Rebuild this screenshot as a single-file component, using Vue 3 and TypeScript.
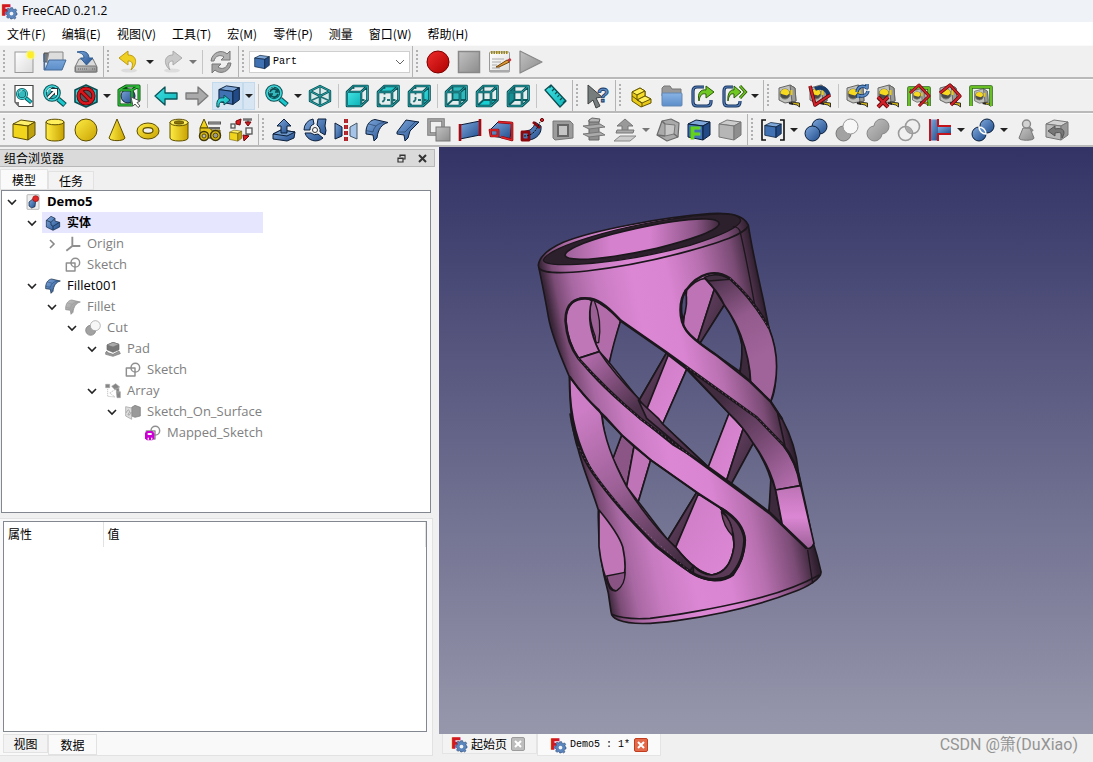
<script setup lang="ts">
import { ref } from 'vue'

interface Tool { kind: 'button' | 'arrow' | 'separator' | 'combo'; icon: string; active: boolean; muted: boolean }
interface Node { label: string; icon: string; level: number; open: 'yes' | 'no' | 'leaf'; tone: 'strong' | 'plain' | 'hidden'; selected?: boolean }

const poly = (points: string, fill: string, stroke = '#0b1f3a', width = 1) =>
  `<polygon points="${points}" fill="${fill}" stroke="${stroke}" stroke-width="${width}" stroke-linejoin="round"/>`
const line = (d: string, stroke: string, width = 1.5, extra = '') =>
  `<path d="${d}" fill="none" stroke="${stroke}" stroke-width="${width}" stroke-linejoin="round" ${extra}/>`
const disc = (x: number, y: number, r: number, fill: string, stroke: string, width = 1) =>
  `<circle cx="${x}" cy="${y}" r="${r}" fill="${fill}" stroke="${stroke}" stroke-width="${width}"/>`

const cube = (top: string, front: string, side: string, stroke: string) =>
  poly('1,6 9,2 23,4 16,8', top, stroke) + poly('1,6 16,8 16,22 1,19', front, stroke) + poly('16,8 23,4 23,17 16,22', side, stroke)

const viewCube = (face: string, fill = 'url(#gCyan)', hidden = true) =>
  `<path d="M2 8L8.500 2H22.500V16L16 22H2Z" fill="#e4eeee"/><polygon points="${face}" fill="${fill}"/>` +
  (hidden ? line('M8.500 2V16H22.500M8.500 16L2 22', '#1f6f73', 1.8, 'stroke-dasharray="3 2.500"') : line('M8.500 2V16H22.500M8.500 16L2 22', '#0d5f63', 1.8)) +
  line('M2 8H16V22H2ZM2 8L8.500 2H22.500L16 8M22.500 2V16L16 22', '#0b4d52', 2.6) +
  line('M2 8H16V22H2ZM2 8L8.500 2H22.500L16 8M22.500 2V16L16 22', '#25a6aa', 1)

const lens = (x: number, y: number, r: number) =>
  line(`M${x + r - 1} ${y + r - 1}L22 21`, '#0b4d52', 5.4) + line(`M${x + r - 1} ${y + r - 1}L21.500 20.500`, '#19c8cc', 3) +
  disc(x, y, r, '#35b9bd', '#0b4d52', 3.6) + disc(x, y, r, 'none', '#3fd6d9', 1.7) +
  `<path d="M${x - r + 2} ${y - 1}q1-4 5-4" fill="none" stroke="#b9eeee" stroke-width="1.200"/>`

const tape =
  poly('2,4 13,1 18,4 19,17 8,19 2,16', '#c0c0bc', '#666') + poly('13,1 18,4 19,17 15,18', '#9a9a96', '#666') +
  disc(8, 10, 5, '#4a4a48', '#77776f') + '<path d="M3.500 9.500a4.500 4.500 0 0 1 9 0l-2.500 2-4-1z" fill="#f7d91f"/>' +
  '<path d="M13.500 6h2v5h-2z" fill="#e9cc1a"/><path d="M14 18L22.500 19V23L20 21L15 20Z" fill="#d8b912" stroke="#222" stroke-width=".9"/><path d="M12 19l4 1" stroke="#222" stroke-width="2"/>'

const fillet = (a: string, stroke: string) =>
  `<path d="M1 12.500C2 5 6 2 10 1.500L23 4.500C17 6 13 11 12 20L9 23L8 17L1 16Z" fill="${a}" stroke="${stroke}"/><path d="M1 12.500L8 14C9 8 14 5 19 4.500M4 6L11 8" fill="none" stroke="${stroke}" opacity=".45"/>`
const gear =
  '<g fill="#5b86bd" stroke="#203e6b" stroke-width=".8"><path d="M14.500 7h3l.5 2.300 1.600.7 2-1.200 2 2-1.200 2 .6 1.700L24 15v3l-2 .5-.7 1.700 1.200 2-2 1.800-2-1.200-1.600.7L16.500 24h-2l-.6-1.500-1.600-.7-2 1.200-2-2 1.200-2-.7-1.500L7 17v-3l2-.5.7-1.600-1.200-2 2-2 2 1.200 1.500-.7z"/></g><circle cx="15.700" cy="15.800" r="2.800" fill="#f3f3f3"/>'
const sketch = line('M2 9H15V21H2Z', '#8f8f8f', 2.2) + '<circle cx="15.500" cy="8.500" r="6.500" fill="none" stroke="#8f8f8f" stroke-width="2.200"/>'

const icons: Record<string, string> = {
  logo: '<text x="1" y="18.500" font-family="Liberation Sans, sans-serif" font-weight="700" font-size="21" fill="#d31920" stroke="#d31920" stroke-width="2">F</text>' + gear,
  new: '<rect x="3" y="2" width="18" height="20.500" fill="url(#gPaper)" stroke="#999"/><circle cx="18.500" cy="5" r="5" fill="#ffff68" opacity=".65"/><circle cx="18.500" cy="5" r="3.200" fill="#ffee25"/>',
  open: '<path d="M1 3H8L10 5H19V12H1Z" fill="#777" stroke="#4f4f4f"/><path d="M6 2H20V12H4Z" fill="#ddd" stroke="#888"/><path d="M1 4V20H19L23 10H6L2 20Z" fill="url(#gFolder)" stroke="#456b99"/>',
  save: '<path d="M5 9H19L23 17V22H1V17Z" fill="#dadada" stroke="#777"/><rect x="1.500" y="16" width="21" height="6" rx="1" fill="url(#gGrey)" stroke="#777"/><path d="M3 2C11 0 15 3 15 8H19L12.500 15 6.500 8H10C10 5 8 3 3 2Z" fill="url(#gBlue)" stroke="#315e94"/><path d="M4 19h9M18 19h3" stroke="#666" stroke-dasharray="1 1"/>',
  undo: '<ellipse cx="12" cy="20.500" rx="8" ry="2" fill="#ddd"/><path d="M2 8L11 1V5C20 5 21 14 14 20C17 13 15 11 11 11V15Z" fill="#efcf22" stroke="#bd9b13"/>',
  redo: '<ellipse cx="12" cy="20.500" rx="8" ry="2" fill="#ddd"/><path d="M22 8L13 1V5C4 5 3 14 10 20C7 13 9 11 13 11V15Z" fill="#c9c9c9" stroke="#aaa"/>',
  refresh: '<path d="M2 11C3 2 13-1 18 4L21 1V10H12L15 7C11 4 6 6 5 11Z" fill="#b1b1b1" stroke="#777"/><path d="M22 13C21 22 11 25 6 20L3 23V14H12L9 17C13 20 18 18 19 13Z" fill="#a4a4a4" stroke="#777"/>',
  record: disc(12, 12, 11, 'url(#gRed)', '#7e0000'),
  stop: '<rect x="1.500" y="1.500" width="21" height="21" fill="url(#gGrey)" stroke="#888" stroke-width="1.500"/>',
  macro: '<rect x="1.500" y="2" width="20" height="20" rx="1" fill="url(#gPaper)" stroke="#999"/><path d="M3 2.500H20" stroke="#9c8618" stroke-width="3" stroke-dasharray="1.500 1"/><path d="M4 9H16M4 12H13M4 15H9M4 18H12" stroke="#aaa"/><path d="M1 21h21" stroke="#aaa" stroke-width="2"/><path d="M8 17L19 10L21.500 12L11 17Z" fill="#e29a37" stroke="#70450b"/><path d="M19 10L22 8 23.500 10 21.500 12Z" fill="#b9363c"/>',
  play: poly('1,1 23,12 1,23', 'url(#gGrey)', '#888', 1.2),
  fitAll: '<path d="M3 1.500H21V22.500H7L3 18Z" fill="#fff" stroke="#444" stroke-width="1.200"/><path d="M3 18H7V22.500Z" fill="#777"/>' + '<g transform="translate(3.500 3.500) scale(.72)">' + lens(9, 9, 6.5) + '</g>',
  fitSel: lens(9, 9, 7) + '<path d="M5 14L12 7M8 6h5v5" stroke="#26343a" stroke-width="4" fill="none"/><path d="M5 14L12 7M8 6h5v5" stroke="#fff" stroke-width="2" fill="none"/>',
  drawStyle: poly('12,1 23,6 23,18 12,23 1,18 1,6', 'url(#gCyan)', '#0b4d52', 1.6) + '<circle cx="12" cy="12" r="7.500" fill="#555a60" stroke="#500" stroke-width="4"/><path d="M7 7L17 17" stroke="#500" stroke-width="4"/><circle cx="12" cy="12" r="7.500" fill="none" stroke="#d8161c" stroke-width="2.500"/><path d="M7 7L17 17" stroke="#d8161c" stroke-width="2.500"/>',
  boundBox: disc(11, 12, 7, 'url(#gBlue)', '#0b1f3a') + line('M2 6H15V21H2ZM2 6L9 2H22L15 6M22 2V16L15 21M9 2V6', '#0a4d10', 3) + line('M2 6H15V21H2ZM2 6L9 2H22L15 6M22 2V16L15 21', '#2fbf3b', 1.4) + '<path d="M14 13L23 17L20 18.500L23 22L21 23.500L18 20L16 22Z" fill="#fff" stroke="#555"/>',
  back: poly('1,12 11,3 11,9 23,9 23,15 11,15 11,21', 'url(#gCyan)', '#0b5458', 1.3),
  forward: poly('23,12 13,3 13,9 1,9 1,15 13,15 13,21', '#aaa', '#7b7b7b', 1.3),
  linkGo: '<g transform="translate(2 0) scale(.93)">' + cube('#7fa8d8', '#3f71b3', '#214a86', '#0b1f3a') + '</g><path d="M1 23C0 16 3 13 8 14V11L14 16L8 21V18C4 17 3 19 3 23Z" fill="url(#gCyan)" stroke="#0b4d52"/>',
  zoomSync: lens(9, 9, 7) + '<path d="M5 8C6 4 11 4 12 7M13 5v3h-3M13 10C12 14 7 14 6 11M5 13v-3h3" stroke="#0b4d52" stroke-width="1.700" fill="none"/>',
  iso: poly('12,2 22,7 22,17 12,22 2,17 2,7', '#d9e8e8', '#0b4d52', 2.4) + line('M2 17L12 12.500L22 17M12 2V12', '#1f6f73', 1.4) + line('M2 7L12 12L22 7M12 12V22', '#0b4d52', 2.4) + line('M2 7L12 12L22 7M12 12V22M12 2L22 7V17L12 22L2 17V7Z', '#25a6aa', 1),
  front: viewCube('2,8 16,8 16,22 2,22') + '<rect x="3" y="9" width="12" height="12" fill="url(#gCyan)"/>',
  top: viewCube('2,8 8.5,2 22.5,2 16,8'),
  right: viewCube('16,8 22.5,2 22.5,16 16,22'),
  rear: viewCube('8.5,2 22.5,2 22.5,16 8.5,16', '#2fb9bd', false),
  bottom: viewCube('2,22 8.5,16 22.5,16 16,22', '#18d0d4', false),
  left: viewCube('2,8 8.5,2 8.5,16 2,22', '#138f94', false),
  ruler: poly('2,6 8,1 23,17 17,23', 'url(#gCyan)', '#0b4d52', 1.3) + line('M8 2L6.500 4M11 5L9 7M14 8L12 10M16 11L14.500 13M19 14L17 16M22 17L20 19', '#0b4d52', 1.2),
  whats: '<path d="M2 1L16 13L10 14L14 22L10 24L7 16L2 20Z" fill="#777c7c" stroke="#3c4141"/><text x="11" y="17.500" font-family="Liberation Sans, sans-serif" font-size="20" font-weight="700" fill="#5c8cc6" stroke="#163863" stroke-width=".8">?</text>',
  part: poly('3,8 11,4 16,7 16,12 22,15 22,19 12,23 3,17', '#e9ca18', '#655500') + poly('3,8 11,4 16,7 8,11', '#fff05a', '#655500') + poly('8,11 16,7 16,12 8,16', '#f5dc28', '#655500') + poly('8,16 16,12 22,15 13,19', '#fff05a', '#655500') + line('M13 19V23M3 12L13 19', '#655500', 1),
  group: '<path d="M2 4L4 2H10L12 5H21V12H2Z" fill="#999" stroke="#777"/><rect x="2" y="9" width="20" height="13" rx="1" fill="url(#gFolder)" stroke="#6387b2"/>',
  link: line('M13 3H6Q2 3 2 7V18Q2 22 6 22H16Q20 22 20 18V16', '#17345f', 3.2) + line('M13 3H6Q2 3 2 7V18Q2 22 6 22H16Q20 22 20 18V16', '#5a83bb', 1.2) + '<path d="M8 17C6 9 10 5 15 6V2L23 8L15 14V10C11 9 9 11 8 17Z" fill="#70c822" stroke="#2c5b08"/>',
  links: line('M11 3H5Q2 3 2 7V18Q2 22 6 22H14Q18 22 18 18V17', '#17345f', 3.2) + line('M11 3H5Q2 3 2 7V18Q2 22 6 22H14Q18 22 18 18V17', '#5a83bb', 1.2) + '<path d="M6 17C5 9 9 5 12 6V2L19 8L12 14V10C9 9 7 11 6 17Z" fill="#70c822" stroke="#2c5b08"/><path d="M18 2L23.500 8L18 14" fill="none" stroke="#2c5b08" stroke-width="3"/><path d="M18 2L23.500 8L18 14" fill="none" stroke="#70c822" stroke-width="1.300"/>',
  measLin: tape,
  measAng: tape + line('M7 5C15 1 20 7 21 12', '#173b6b', 4) + line('M2 2L7 21L22 11', '#620609', 3.5) + line('M2 2L7 21L22 11', '#d3232a', 2),
  measRefresh: tape + line('M12 8C13 2 18 1 22 4V0M23 7C22 12 17 13 13 11V14', '#173b6b', 3.4) + line('M12 8C13 2 18 1 22 4V0M23 7C22 12 17 13 13 11V14', '#5b8ac4', 1.8),
  measClear: tape + line('M2 13L12 23M12 13L2 23', '#690609', 4) + line('M2 13L12 23M12 13L2 23', '#d3232a', 2.4),
  measAll: line('M2 22V4H22V22', '#255f0b', 3.5) + line('M2 22V4H22V22', '#68bf24', 2) + '<g transform="translate(4 4) scale(.75)">' + tape + '</g>' + line('M3 9L12 1L22 12L12 22', '#650609', 3) + line('M3 9L12 1L22 12L12 22', '#d3232a', 1.7),
  meas3d: tape + line('M2 9L12 1L22 12L13 21', '#650609', 3.3) + line('M2 9L12 1L22 12L13 21', '#d3232a', 1.8),
  measDelta: '<g transform="translate(4 4) scale(.8)">' + tape + '</g>' + line('M2 22V3H22V22', '#255f0b', 3.5) + line('M2 22V3H22V22', '#68bf24', 2),
  box: cube('#fff06b', '#f0d51c', '#bfa10b', '#5d4e00'),
  boxBlue: cube('#7fa8d8', '#3f71b3', '#214a86', '#0b1f3a'),
  cylinder: '<path d="M3 4V20C3 24 21 24 21 20V4Z" fill="url(#gYellowH)" stroke="#5d4e00"/><ellipse cx="12" cy="4" rx="9" ry="2.800" fill="#ffef5d" stroke="#5d4e00"/>',
  sphere: disc(12, 12, 11, 'url(#gYellow)', '#5d4e00'),
  cone: '<path d="M12 1L20 20C19 23.500 5 23.500 4 20Z" fill="url(#gYellowH)" stroke="#5d4e00"/>',
  torus: '<ellipse cx="12" cy="13" rx="11" ry="8" fill="url(#gYellow)" stroke="#5d4e00"/><ellipse cx="12" cy="12.500" rx="5" ry="2.800" fill="#f0f0f0" stroke="#5d4e00" stroke-width="1.200"/>',
  tube: '<path d="M3 4V20C3 24 21 24 21 20V4Z" fill="url(#gYellowH)" stroke="#5d4e00"/><ellipse cx="12" cy="4.500" rx="9" ry="3.300" fill="#ffef5d" stroke="#5d4e00"/><ellipse cx="12" cy="4.500" rx="5" ry="1.600" fill="#8a7408" stroke="#5d4e00"/>',
  primitives: poly('6,1 10,10 2,10', '#efd21b', '#5d4e00') + '<path d="M10 5h13" stroke="#555" stroke-width="3"/><path d="M11 5h11" stroke="#aaa"/><path d="M2 10H13V12H22V20H2Z" fill="#e3c51b" stroke="#5d4e00"/><path d="M11 10h11" stroke="#666" stroke-width="2"/>' + disc(6, 18, 4.5, '#d4b615', '#40370b', 1.5) + disc(6, 18, 2, '#bbb', '#5d4e00') + disc(17.5, 17.5, 5, '#d4b615', '#40370b', 1.5) + disc(17.5, 17.5, 2.4, '#999', '#5d4e00'),
  builder: '<g transform="translate(0 11) scale(.55)">' + cube('#fff06b', '#f0d51c', '#bfa10b', '#5d4e00') + '</g><path d="M14 1.500H23M19 2V6M16 19L21 15" stroke="#777" stroke-width="2.500"/><path d="M7 3L12 1L11 7L7 6ZM16 4H22L19 8ZM14 17L20 18L15 23Z" fill="#d81b22" stroke="#720709"/><rect x="17" y="10" width="6" height="6" fill="#f4f4f4" stroke="#555" stroke-width="1.300"/><rect x="2" y="6" width="4" height="4" fill="#eee" stroke="#555" stroke-width="1.300"/>',
  extrude: poly('1,16 9,12 23,14 22,20 15,23 1,21', 'url(#gBlue)') + poly('1,16 9,12 23,14 15,18', '#6f98cb') + '<path d="M12 1L19 8H15V15H9V8H5Z" fill="url(#gBlue)" stroke="#0b1f3a"/>',
  revolve: '<path d="M10 1A11 11 0 0 0 1 12L7 12A6 6 0 0 1 11 6ZM2 15A11 11 0 0 0 20 20L15 16A6 6 0 0 1 8 15ZM15 1L23 1L22 8A11 11 0 0 1 22 17L17 14A6 6 0 0 0 16 9L14 7Z" fill="url(#gBlue)" stroke="#0b1f3a"/><circle cx="12" cy="12" r="2.500" fill="#fff" stroke="#333"/>',
  mirror: poly('1,5 8,9 8,18 1,21', 'url(#gBlue)') + poly('23,5 16,9 16,18 23,21', '#a6c4e8', '#456') + '<path d="M12 1V23" stroke="#650609" stroke-width="3.600" stroke-dasharray="4 2"/><path d="M12 1V23" stroke="#e01b22" stroke-width="2" stroke-dasharray="4 2"/>',
  fillet: fillet('url(#gBlue)', '#0b1f3a'),
  chamfer: poly('1,14 10,2 23,4 14,13 12,20 9,23 8,17 1,16', 'url(#gBlue)') + line('M1 14L9 14L19 4', '#0b1f3a', 1, 'opacity=".45"'),
  makeFace: '<rect x="2" y="2" width="14" height="14" fill="none" stroke="#777" stroke-width="3.500"/><rect x="2" y="2" width="14" height="14" fill="none" stroke="#aaa" stroke-width="1.500"/><rect x="9" y="9" width="14" height="14" fill="url(#gGrey)" stroke="#777"/>',
  ruled: poly('2,7 22,3 22,17 2,21', 'url(#gBlue)') + line('M2 6V23M22 1V18', '#a50b10', 2.6),
  loft: poly('1,12 9,4 23,5 21,21 9,19 2,18', 'url(#gBlue)') + line('M9 4L23 5V22L12 19M1 12H9V18H2Z', '#8b090e', 2.7) + line('M9 4L23 5V22L12 19M1 12H9V18H2Z', '#df2429', 1.3),
  sweep: '<path d="M2 14L10 12C13 10 15 7 15 4L21 8C22 15 17 21 9 22L2 21Z" fill="url(#gBlue)" stroke="#0b1f3a"/>' + line('M2 14H9V22H2ZM13 4L20 10', '#8b090e', 2.8) + disc(22, 2, 1.6, '#df2429', '#650609') + line('M4 18C15 18 18 8 20 4', '#111', 1, 'stroke-dasharray="2 1"'),
  offset: poly('2,3 19,3 22,6 22,20 4,22 2,20', '#9c9c9c', '#777') + '<rect x="7" y="7" width="10" height="11" fill="#c5c5c5" stroke="#666" stroke-width="2"/>',
  sections: poly('7,2 17,2 17,22 7,22', '#8f8f8f', '#666') + poly('1,8 18,6 23,9 7,11', '#aaa', '#777') + poly('1,16 18,14 23,17 7,19', '#aaa', '#777') + poly('7,2 10,0 18,1 17,4 7,4', '#b5b5b5', '#666'),
  projection: '<path d="M12 1L20 8H15V13H9V8H4Z" fill="#999" stroke="#777"/>' + poly('4,12 21,12 20,15 3,15', '#aaa', '#777') + poly('7,18 23,18 17,23 1,23', '#ccc', '#888'),
  thickness: poly('6,3 15,1 23,5 22,19 11,23 1,17', '#aaa', '#6b6b6b', 1.2) + poly('9,6 19,7 18,16 9,18', '#c7c7c7', '#777') + line('M6 3L9 6M9 18L1 17M18 16L22 19', '#6b6b6b', 1.5),
  projFace: cube('#7fa8d8', '#3f71b3', '#214a86', '#0b1f3a') + '<text x="3" y="21" font-family="Liberation Sans, sans-serif" font-weight="700" font-size="17" fill="#65d21b" stroke="#65d21b" stroke-width="1.200">F</text>',
  cubeGrey: cube('#ccc', '#b6b6b6', '#8e8e8e', '#777'),
  compound: '<path d="M5 2H1V22H5M19 2H23V22H19" fill="none" stroke="#111" stroke-width="1.600"/><g transform="translate(3 3) scale(.75)">' + cube('#7fa8d8', '#3f71b3', '#214a86', '#0b1f3a') + '</g>',
  boolean: disc(15.5, 8.5, 7.5, 'url(#gBlue)', '#0b1f3a') + disc(8.5, 15.5, 7.5, 'url(#gBlue)', '#0b1f3a'),
  cut: disc(8.5, 15.5, 7.5, '#a2a2a2', '#777') + disc(15.5, 8.5, 7.5, '#f7f7f7', '#999'),
  union: '<path d="M8 8A7.500 7.500 0 1 1 16 16A7.500 7.500 0 1 1 8 8Z" fill="url(#gGrey)" stroke="#858585"/>',
  common: disc(15.5, 8.5, 7, 'none', '#9a9a9a', 1.6) + disc(8.5, 15.5, 7, 'none', '#9a9a9a', 1.6) + '<path d="M9 8.500A7 7 0 0 1 15 15A7 7 0 0 1 9 8.500Z" fill="#aaa"/>',
  join: '<rect x="2" y="1.500" width="9" height="21" fill="url(#gBlue)"/><rect x="10" y="9" width="13" height="7" fill="url(#gBlue)"/>' + line('M2 1V23M10 1V8H23M10 23V16H23', '#c2141a', 2),
  split: disc(16, 8, 7, 'url(#gBlue)', '#0b1f3a') + disc(8, 16, 7, 'url(#gBlue)', '#0b1f3a') + '<path d="M8 9A7 7 0 0 1 15 16A7 7 0 0 1 8 9Z" fill="#5e8cc6" stroke="#fff" stroke-width="1.500"/>',
  check: '<path d="M9 10L5 20C5 23 20 23 20 20L16 10Z" fill="url(#gGrey)" stroke="#777"/>' + disc(12.5, 6, 4, '#d2d2d2', '#888', 1.4) + line('M15 9L19 13', '#888', 2),
  defeature: cube('#d3d3d3', '#b8b8b8', '#989898', '#777') + '<path d="M3 13L10 8V11C19 9 21 14 17 20C17 14 15 14 10 15V18Z" fill="#777" stroke="#555"/>',
  doc: '<rect x="3" y="1" width="18" height="22" rx="1" fill="#eee" stroke="#999"/>' + poly('6,12 11,8 16,10 15,19 10,21 6,18', 'url(#gBlue)') + disc(16, 7, 4.5, '#e32525', '#8b1414'),
  body: poly('2,8 9,2 15,5 15,9 22,11 22,18 12,23 2,18', 'url(#gBlue)') + line('M2 8L9 11L15 5M9 11V15L12 17L22 11M12 17V22', '#0b1f3a', 1),
  origin: line('M11 1V15H23M11 15L2 22', '#8f8f8f', 2.8),
  sketch,
  filletGrey: fillet('url(#gGrey)', '#888'),
  pad: poly('3,6 12,2 21,5 21,13 12,17 3,13', '#777', '#666') + poly('3,6 12,2 21,5 12,9', '#aaa', '#777') + '<path d="M1 17L3 15V17L12 20L21 15L23 19L12 23L1 20Z" fill="#999" stroke="#777"/>',
  array: '<path d="M1 2H7V7H1ZM10 5L16 1L22 6L15 10ZM17 13H23V22H18ZM16 8h5v7h-3z" fill="#858585" stroke="#a5a5a5"/><path d="M4 9V20L15 21L7 15L15 10" fill="none" stroke="#aaa" stroke-dasharray="2 1"/>',
  surface: '<path d="M10 5L15 2L23 5V18L15 20L10 18Z" fill="#999" stroke="#777"/><path d="M1 4L10 6V23L1 18Z" fill="#ddd" stroke="#999"/><path d="M2 13C5 5 9 11 5 15C3 18 9 17 9 12" fill="none" stroke="#888"/>',
  mapped: sketch + '<path d="M3 9H11L14 12V20L11 23H3L0 20V12Z" fill="#cc00d5"/><path d="M4 12h6v3H4zM4 19h2v3H4zM9 19h2v3H9z" fill="#fff"/>',
}

const parse = (text: string): Tool[][] =>
  text.split(';').map((group) =>
    group.trim().split(/\s+/).map((token) => {
      const name = token.replace('*', '')
      const kind = name === '|' ? 'separator' : name === 'v' || name === 'w' ? 'arrow' : name === 'combo' ? 'combo' : 'button'
      return { kind, icon: name, active: token.endsWith('*'), muted: name === 'w' } as Tool
    }),
  )

const rows: Tool[][][] = [
  parse('new open save ; undo v redo w | refresh ; combo ; record stop macro play'),
  parse('fitAll fitSel drawStyle v boundBox | back forward linkGo* v* | zoomSync v iso | front top right | rear bottom left | ruler ; whats ; part group link links v ; measLin measAng | measRefresh measClear measAll meas3d measDelta'),
  parse('box cylinder sphere cone torus tube primitives builder ; extrude revolve mirror fillet chamfer makeFace ruled loft sweep offset sections projection w thickness projFace cubeGrey ; compound v boolean cut union common join v split v check defeature'),
]

const menus = ['文件(F)', '编辑(E)', '视图(V)', '工具(T)', '宏(M)', '零件(P)', '测量', '窗口(W)', '帮助(H)']
const nodes: Node[] = [
  { label: 'Demo5', icon: 'doc', level: 0, open: 'yes', tone: 'strong' },
  { label: '实体', icon: 'body', level: 1, open: 'yes', tone: 'strong', selected: true },
  { label: 'Origin', icon: 'origin', level: 2, open: 'no', tone: 'hidden' },
  { label: 'Sketch', icon: 'sketch', level: 2, open: 'leaf', tone: 'hidden' },
  { label: 'Fillet001', icon: 'fillet', level: 1, open: 'yes', tone: 'plain' },
  { label: 'Fillet', icon: 'filletGrey', level: 2, open: 'yes', tone: 'hidden' },
  { label: 'Cut', icon: 'cut', level: 3, open: 'yes', tone: 'hidden' },
  { label: 'Pad', icon: 'pad', level: 4, open: 'yes', tone: 'hidden' },
  { label: 'Sketch', icon: 'sketch', level: 5, open: 'leaf', tone: 'hidden' },
  { label: 'Array', icon: 'array', level: 4, open: 'yes', tone: 'hidden' },
  { label: 'Sketch_On_Surface', icon: 'surface', level: 5, open: 'yes', tone: 'hidden' },
  { label: 'Mapped_Sketch', icon: 'mapped', level: 6, open: 'leaf', tone: 'hidden' },
]
const workbench = ref('Part')
</script>

<template>
  <div class="window">
    <svg class="defs" width="0" height="0" aria-hidden="true">
      <defs>
        <linearGradient id="gBlue" x1="0" y1="0" x2="1" y2="1"><stop offset="0" stop-color="#7fa8dc" /><stop offset="1" stop-color="#1f4c8c" /></linearGradient>
        <linearGradient id="gCyan" x1="0" y1="0" x2="1" y2="1"><stop offset="0" stop-color="#3fe0e2" /><stop offset="1" stop-color="#10b4b8" /></linearGradient>
        <linearGradient id="gGrey" x1="0" y1="0" x2="1" y2="1"><stop offset="0" stop-color="#c2c2c2" /><stop offset="1" stop-color="#8c8c8c" /></linearGradient>
        <linearGradient id="gRed" x1="0" y1="0" x2="1" y2="1"><stop offset="0" stop-color="#f02d2d" /><stop offset="1" stop-color="#ae0000" /></linearGradient>
        <linearGradient id="gPaper" x1="0" y1="0" x2="1" y2="1"><stop offset="0" stop-color="#fff" /><stop offset="1" stop-color="#dcdcdc" /></linearGradient>
        <linearGradient id="gFolder" x1="0" y1="0" x2="0" y2="1"><stop offset="0" stop-color="#88b3e6" /><stop offset="1" stop-color="#5d8ec8" /></linearGradient>
        <linearGradient id="gYellow" x1="0" y1="0" x2="1" y2="1"><stop offset="0" stop-color="#ffec45" /><stop offset="1" stop-color="#c8a200" /></linearGradient>
        <linearGradient id="gYellowH" x1="0" y1="0" x2="1" y2="0"><stop offset="0" stop-color="#ffec45" /><stop offset="1" stop-color="#c8a200" /></linearGradient>
      </defs>
    </svg>

    <header class="title"><svg class="small" viewBox="0 0 24 24" v-html="icons.logo" /><span>FreeCAD 0.21.2</span></header>
    <nav class="menu"><button v-for="m in menus" :key="m" type="button">{{ m }}</button></nav>

    <div v-for="(row, r) in rows" :key="r" class="toolrow">
      <div v-for="(group, g) in row" :key="g" class="toolbar" role="toolbar">
        <template v-for="(tool, t) in group" :key="t">
          <span v-if="tool.kind === 'separator'" class="sep" />
          <button v-else-if="tool.kind === 'arrow'" type="button" class="arrow" :class="{ active: tool.active, muted: tool.muted }" aria-label="更多" />
          <label v-else-if="tool.kind === 'combo'" class="combo">
            <svg class="small" viewBox="0 0 24 24" v-html="icons.boxBlue" />
            <select v-model="workbench" aria-label="Workbench"><option>Part</option></select>
            <svg class="caret" viewBox="0 0 10 6"><path d="M1 1l4 4 4-4" fill="none" stroke="#666" /></svg>
          </label>
          <button v-else type="button" class="tool" :class="{ active: tool.active }" :aria-label="tool.icon"><svg viewBox="0 0 24 24" v-html="icons[tool.icon]" /></button>
        </template>
      </div>
    </div>

    <main class="body">
      <aside class="dock">
        <div class="dock-title">
          <span>组合浏览器</span>
          <button type="button" aria-label="浮动"><svg viewBox="0 0 9 9"><path d="M3 3V1H8V5H6M1 4H6V8H1ZM1 4.500H6M3 1.500H8" fill="none" stroke="#333" stroke-width="1.200" /></svg></button>
          <button type="button" aria-label="关闭"><svg viewBox="0 0 9 9"><path d="M1 1L8 8M8 1L1 8" stroke="#333" stroke-width="2" /></svg></button>
        </div>
        <div class="tabs upper" role="tablist">
          <button type="button" role="tab" class="current" aria-selected="true">模型</button>
          <button type="button" role="tab" aria-selected="false">任务</button>
        </div>
        <ul class="tree" role="tree">
          <li v-for="(n, i) in nodes" :key="i" role="treeitem" :aria-level="n.level + 1" :class="n.tone" :style="{ paddingLeft: n.level * 20 + 'px' }">
            <button v-if="n.open !== 'leaf'" type="button" class="twist" :aria-label="'展开 ' + n.label">
              <svg viewBox="0 0 10 10"><path :d="n.open === 'yes' ? 'M1 3l4 4 4-4' : 'M3 1l4 4-4 4'" fill="none" :stroke="n.open === 'yes' ? '#222' : '#888'" stroke-width="1.600" /></svg>
            </button>
            <span v-else class="twist" />
            <span class="entry" :class="{ selected: n.selected }"><svg class="small" viewBox="0 0 24 24" v-html="icons[n.icon]" /><span>{{ n.label }}</span></span>
          </li>
        </ul>
        <section class="props">
          <div class="sheet">
            <table><thead><tr><th class="key">属性</th><th>值</th></tr></thead></table>
          </div>
          <div class="tabs lower" role="tablist">
            <button type="button" role="tab" aria-selected="false">视图</button>
            <button type="button" role="tab" class="current" aria-selected="true">数据</button>
          </div>
        </section>
      </aside>

      <section class="stage">
        <svg class="scene" viewBox="439 147 654 587" preserveAspectRatio="xMidYMid meet" role="img" aria-label="Demo5">
          <defs>
            <linearGradient id="sky" gradientUnits="userSpaceOnUse" x1="0" y1="-159" x2="0" y2="1602"><stop offset="0" stop-color="#333366" /><stop offset="1" stop-color="#9797ac" /></linearGradient>
            <linearGradient id="shell" gradientUnits="userSpaceOnUse" x1="35" y1="215" x2="655" y2="89">
              <stop offset="0" stop-color="#3a2639" /><stop offset=".05" stop-color="#7b4c76" /><stop offset=".13" stop-color="#a868a2" /><stop offset=".25" stop-color="#c87bc1" /><stop offset=".42" stop-color="#dc87d4" /><stop offset=".58" stop-color="#da85d2" /><stop offset=".74" stop-color="#b870b0" /><stop offset=".9" stop-color="#7b4c76" /><stop offset="1" stop-color="#30202f" />
            </linearGradient>
            <linearGradient id="bore" x1="0" y1="0" x2="1" y2="0"><stop offset="0" stop-color="#9d6197" /><stop offset=".3" stop-color="#d681ce" /><stop offset=".55" stop-color="#d681ce" /><stop offset=".85" stop-color="#8b5586" /><stop offset="1" stop-color="#402a3e" /></linearGradient>
            <linearGradient id="wallA" gradientUnits="userSpaceOnUse" x1="160" y1="440" x2="330" y2="620"><stop offset="0" stop-color="#bd73b6" /><stop offset=".4" stop-color="#93598d" /><stop offset="1" stop-color="#4a3048" /></linearGradient>
            <linearGradient id="wallB" gradientUnits="userSpaceOnUse" x1="560" y1="240" x2="690" y2="470"><stop offset="0" stop-color="#513450" /><stop offset=".5" stop-color="#935b8d" /><stop offset="1" stop-color="#a0639a" /></linearGradient>
            <linearGradient id="wallC" gradientUnits="userSpaceOnUse" x1="150" y1="640" x2="460" y2="1090"><stop offset="0" stop-color="#cc7dc5" /><stop offset=".45" stop-color="#9c6096" /><stop offset="1" stop-color="#3f2a3e" /></linearGradient>
            <linearGradient id="wallD" gradientUnits="userSpaceOnUse" x1="560" y1="600" x2="780" y2="860"><stop offset="0" stop-color="#402b3f" /><stop offset=".5" stop-color="#744870" /><stop offset="1" stop-color="#b26cab" /></linearGradient>
            <linearGradient id="endD" x1="0" y1="0" x2="0" y2="1"><stop offset="0" stop-color="#bd73b5" /><stop offset=".5" stop-color="#dc87d4" /><stop offset="1" stop-color="#9b6096" /></linearGradient>
            <linearGradient id="post" x1="0" y1="0" x2="1" y2="1"><stop offset="0" stop-color="#ce7cc6" /><stop offset="1" stop-color="#dd88d5" /></linearGradient>
            <linearGradient id="shade" x1="0" y1="0" x2="1" y2="1"><stop offset="0" stop-color="#6b4468" /><stop offset="1" stop-color="#3b283a" /></linearGradient>
          </defs>
          <g transform="translate(530 200) scale(.33333)" stroke="#1c171c" stroke-width="5" stroke-linejoin="round">
            <!-- outer shell -->
            <path fill="url(#shell)" d="M25 195C28 170 60 145 100 127C190 90 400 52 540 41C600 38 640 44 655 75C660 110 680 210 700 300L717 385C735 435 742 480 736 550Q732 585 722 605L757 658C785 710 800 760 805 815L830 930L850 1030L862 1070L873 1115C875 1135 835 1160 790 1176C690 1215 560 1245 440 1262C370 1272 300 1274 265 1260Q244 1252 243 1235L235 1180C215 1110 203 1030 205 930C190 880 160 810 145 750Q120 680 118 530C95 475 65 410 55 350C45 290 30 220 25 195Z" />
            <!-- top ring and bore -->
            <path fill="#2d202d" stroke-width="4" d="M40 180C50 155 130 125 220 100C330 70 480 46 560 42C600 41 630 46 632 62C628 82 570 108 480 136C370 166 240 188 140 193C80 196 40 192 40 180Z" />
            <path fill="url(#bore)" stroke-width="5" d="M105 165C110 145 190 115 280 94C380 71 480 55 530 57C558 58 570 64 567 74C555 95 470 123 380 145C300 163 200 179 150 178C120 177 105 173 105 165Z" />
            <path fill="none" d="M27 205C40 220 100 220 170 213C280 200 390 177 480 152C570 126 640 105 655 78" />
            <path fill="none" stroke-width="4" d="M608 80Q628 80 631 98Q650 180 675 320M833 1050L848 1150" />
            <!-- upper right slot -->
            <path fill="#bd73b5" d="M470 270Q498 238 525 235L553 268L503 424Q470 400 460 375Z" />
            <path fill="url(#sky)" d="M466 270Q476 312 459 360Q447 315 466 270Z" />
            <path fill="url(#shade)" d="M553 268L583 315L510 430L503 422Z" />
            <path fill="url(#sky)" d="M583 315Q625 375 637 440Q638 470 630 515L510 430Z" />
            <path fill="#3c293b" d="M633 405Q655 450 662 545L630 518Q640 460 633 405Z" />
            <path fill="url(#wallB)" d="M525 235Q560 215 600 238Q660 290 717 385Q760 490 722 605L662 545Q660 480 632 405Q615 360 583 315Q565 275 525 235Z" />
            <path fill="#402d3f" stroke-width="4" d="M523 232Q560 214 600 238L535 243Z" />
            <path fill="none" stroke-width="7" d="M470 268C445 300 445 360 470 393C490 420 520 438 560 466L660 545L722 605L757 658M470 268C505 220 555 205 600 235C650 280 690 330 717 385" />
            <!-- upper left slot -->
            <path fill="#b36caa" d="M190 300Q230 318 272 362L238 488L208 455Q170 380 190 300Z" />
            <path fill="url(#sky)" d="M272 362L410 458L328 600L238 488Q250 430 272 362Z" />
            <path fill="#9a5f93" stroke-width="4" d="M193 302Q217 360 206 428Q194 430 196 410Q170 340 185 302Z" />
            <path fill="#c077b8" d="M107 360Q108 310 150 295Q170 291 185 302Q166 370 208 455L145 475Q112 425 107 360Z" />
            <path fill="url(#wallA)" d="M145 475L208 455Q250 520 330 600L480 765L430 735L330 655Q210 560 145 475Z" />
            <path fill="url(#shade)" d="M410 458L328 600L352 630L418 468Z" />
            <path fill="url(#post)" d="M415 465L470 508L398 672L350 628Z" />
            <path fill="url(#sky)" d="M470 508L598 640L536 802L398 672Z" />
            <path fill="url(#shade)" d="M325 600L385 655L398 672L536 802L480 765L350 655Z" />
            <!-- right slot -->
            <path fill="url(#post)" d="M597 640L640 685L590 840L535 800Z" />
            <path fill="url(#shade)" d="M640 685L670 730L605 850L590 840Z" />
            <path fill="url(#sky)" d="M670 730Q715 800 725 850L717 935L605 850Z" />
            <path fill="#3c293b" d="M723 830L737 870L757 975L717 935Z" />
            <path fill="url(#wallD)" d="M470 505L680 652L760 735Q803 795 812 857L737 870Q720 800 670 730Q640 680 597 640Z" />
            <path fill="url(#endD)" d="M737 870L812 857L830 935L852 1030Q842 1052 827 1043L757 975Z" />
            <!-- left lower slot -->
            <path fill="#8b5685" d="M275 705L312 740L290 860L248 775Z" />
            <path fill="#be74b6" d="M312 740L362 780L325 905L290 860Z" />
            <path fill="url(#sky)" d="M216 645L275 705L248 778Q222 720 216 645Z" />
            <path fill="url(#sky)" d="M362 780L500 877L413 1020L325 905Z" />
            <path fill="url(#shade)" d="M500 877L413 1020L437 1042L508 884Z" />
            <path fill="url(#post)" d="M505 882L572 925Q610 980 613 1040Q605 1115 545 1125Q500 1120 437 1042Z" />
            <path fill="url(#wallC)" d="M120 530Q160 590 207 630L215 645Q225 740 290 860Q360 970 437 1042Q495 1117 545 1125Q600 1120 612 1040Q615 975 572 925Q635 965 644 1010Q650 1070 610 1125Q570 1155 510 1132Q460 1110 380 1040Q250 910 190 820Q115 690 120 530Z" />
            <path fill="#5a3a57" d="M572 925Q640 965 644 1020Q642 1085 600 1128Q550 1155 490 1122L490 1098Q515 1125 545 1125Q600 1120 612 1040Q615 975 572 925Z" />
            <path fill="#68415f" stroke-width="4" d="M574 935Q608 960 608 1008Q580 980 574 935Z" />
            <!-- small lower left slot -->
            <path fill="#c176b8" d="M207 930Q265 1000 278 1040Q293 1110 277 1148Q260 1185 240 1165Q215 1115 207 1040Z" />
            <path fill="#895483" stroke-width="4" d="M230 1128L285 1117Q286 1155 260 1172Q240 1175 230 1128Z" />
            <!-- front edges -->
            <path fill="none" stroke-width="8" d="M107 365C105 310 135 290 180 296C215 303 240 328 272 362L410 458L680 652L760 735Q800 785 812 857M107 365Q112 430 145 475Q230 570 330 655L480 765L720 940L830 1045" />
            <path fill="none" stroke-width="6" d="M118 530Q170 600 230 655L275 705L362 780L500 877L590 935" />
            <path fill="none" stroke-width="9" d="M122 640Q135 740 190 820Q260 920 380 1040L480 1115Q545 1155 600 1128Q640 1090 644 1020Q640 965 572 925" />
            <path fill="none" stroke="#c48fbe" stroke-width="1.500" stroke-dasharray="4 9" d="M145 475Q230 570 330 655L480 765M470 501L680 652L760 735M145 740Q170 790 220 860Q310 970 480 1115M600 235Q660 285 717 385" />
            <path fill="none" d="M245 1243Q285 1260 360 1255C430 1248 560 1224 650 1203C730 1185 800 1162 868 1125M743 640L765 738M480 1112L492 1095" />
          </g>
        </svg>
        <footer class="mdi">
          <div class="doc-tab"><svg class="small" viewBox="0 0 24 24" v-html="icons.logo" /><button type="button" class="name">起始页</button><button type="button" class="close" aria-label="关闭起始页"><svg viewBox="0 0 8 8"><path d="M1 1L7 7M7 1L1 7" stroke="#fff" stroke-width="2" /></svg></button></div>
          <div class="doc-tab front"><svg class="small" viewBox="0 0 24 24" v-html="icons.logo" /><button type="button" class="name mono">Demo5 : 1*</button><button type="button" class="close hot" aria-label="关闭 Demo5"><svg viewBox="0 0 8 8"><path d="M1 1L7 7M7 1L1 7" stroke="#fff" stroke-width="2" /></svg></button></div>
          <span class="credit">CSDN @箫(DuXiao)</span>
        </footer>
      </section>
    </main>
  </div>
</template>

<style>
html, body { margin: 0; height: 100%; overflow: hidden; }
</style>

<style scoped>
.window { display: flex; flex-direction: column; height: 100vh; background: #f0f0f0; color: #000; font: 12px/16px "Open Sans", "Noto Sans CJK SC", sans-serif; overflow: hidden; }
.window * { box-sizing: border-box; }
.defs { position: absolute; }
button { margin: 0; padding: 0; border: 0; background: none; color: inherit; font: inherit; white-space: nowrap; }
svg { display: block; flex: none; overflow: visible; }
.small { width: 16px; height: 16px; }
.title { display: flex; align-items: center; gap: 5px; flex: 0 0 22px; padding-left: 1px; background: #eff3f8; }
.menu { display: flex; flex: 0 0 23px; gap: 16px; padding-left: 7px; background: #fff; font-family: "Noto Sans CJK SC", sans-serif; }
.toolrow { display: flex; flex: 0 0 34px; align-items: stretch; border-top: 1px solid #fafafa; border-bottom: 2px solid #b9b9b9; }
.toolbar { display: flex; align-items: center; position: relative; padding-left: 12px; }
.toolbar:first-child { padding-left: 8px; }
.toolbar::before { content: ""; position: absolute; left: 6px; top: 4px; bottom: 3px; width: 2px; background: repeating-linear-gradient(#b0b0b0 0 2px, transparent 2px 4px); }
.toolbar:first-child::before { left: 3px; }
.toolbar:not(:first-child)::after { content: ""; position: absolute; left: 2px; top: 0; bottom: 0; width: 1px; background: #b4b4b4; }
.tool { display: flex; align-items: center; width: 31px; height: 28px; padding-left: 4px; }
.tool svg { width: 24px; height: 24px; }
.active { background: #d7e6f2; box-shadow: inset 0 0 0 1px #c3daec; }
.arrow { display: grid; place-items: center; width: 12px; height: 28px; }
.arrow::after { content: ""; border: 4px solid transparent; border-top-color: #222; border-bottom: 0; }
.arrow.muted::after { border-top-color: #777; }
.sep { width: 6px; height: 24px; background: linear-gradient(#c5c5c5, #c5c5c5) 3px 0 / 1px 100% no-repeat; }
.combo { display: flex; align-items: center; width: 161px; height: 22px; margin-left: 1px; padding: 0 4px; border: 1px solid #cfcfcf; background: #fff; }
.combo select { flex: 1; appearance: none; border: 0; padding: 0 0 0 3px; background: none; color: #000; font: 10px/14px "Liberation Mono", monospace; }
.caret { width: 10px; height: 6px; }
.body { display: flex; flex: 1; min-height: 0; }
.dock { display: flex; flex-direction: column; flex: 0 0 439px; padding: 2px 6px 6px 0; }
.dock-title { display: flex; align-items: center; gap: 12px; flex: 0 0 18px; margin-right: -2px; padding: 0 7px 0 4px; border: 1px solid #b8b8b8; border-left: 0; background: #dadada; font-family: "Noto Sans CJK SC", sans-serif; }
.dock-title span { flex: 1; }
.dock-title svg { width: 9px; height: 9px; }
.tabs { display: flex; font-family: "Noto Sans CJK SC", sans-serif; }
.tabs button { width: 46px; height: 19px; border: 1px solid #e2e2e2; background: #f3f3f3; }
.tabs .current { width: 48px; height: 21px; background: #fafafa; }
.upper { align-items: flex-end; flex: 0 0 23px; }
.lower { align-items: flex-start; flex: 0 0 21px; }
.tree { flex: 320 1 0; min-height: 0; margin: 0 2px 0 1px; padding: 0; border: 1px solid #828790; background: #fff; list-style: none; font-size: 13px; line-height: 21px; overflow: hidden; }
.tree li { display: flex; height: 21px; }
.twist { display: grid; place-items: center; flex: 0 0 20px; height: 21px; }
.twist svg { width: 10px; height: 10px; }
.entry { display: flex; align-items: center; gap: 6px; padding-left: 3px; }
.selected { width: 221px; background: #e6e6ff; font-size: 12px; }
.strong { font-weight: 700; }
.hidden { color: #808080; }
.props { display: flex; flex-direction: column; flex: 234 1 0; min-height: 0; margin-top: 5px; padding: 2px 0 0 3px; border: 1px solid #e2e2e2; border-left: 0; background: #f9f9f9; }
.sheet { flex: 1; min-height: 0; margin: 0 5px 2px 0; border: 1px solid #828790; background: #fff; }
.sheet table { width: 100%; border-collapse: collapse; font-family: "Noto Sans CJK SC", sans-serif; }
.sheet th { height: 25px; padding: 0 0 0 4px; border-right: 1px solid #e2e2e2; font-weight: 400; text-align: left; }
.sheet .key { width: 99px; }
.lower button { width: 45px; }
.lower .current { width: 49px; }
.stage { display: flex; flex-direction: column; flex: 1; min-width: 0; }
.scene { flex: 1; min-height: 0; width: 100%; overflow: hidden; background: linear-gradient(#333366, #9797ac); }
.mdi { display: flex; align-items: flex-start; flex: 0 0 28px; padding-left: 3px; }
.doc-tab { display: flex; align-items: center; gap: 4px; height: 20px; padding: 0 11px 0 8px; border: 1px solid #e4e4e4; border-top: 0; background: #f3f3f3; }
.doc-tab.front { height: 22px; padding: 0 12px; background: #fafafa; }
.name { font-family: "Noto Sans CJK SC", sans-serif; }
.mono { font: 10px/14px "Liberation Mono", monospace; }
.close { display: grid; place-items: center; width: 14px; height: 14px; border: 1px solid #9c9c9c; border-radius: 2px; background: #bdbdbd; }
.close.hot { border-color: #c23c1e; background: #e2694a; }
.close svg { width: 8px; height: 8px; }
.credit { margin-left: auto; padding-right: 15px; color: #949494; font: 16px/22px Roboto, "Noto Sans CJK SC", sans-serif; white-space: nowrap; }
</style>
